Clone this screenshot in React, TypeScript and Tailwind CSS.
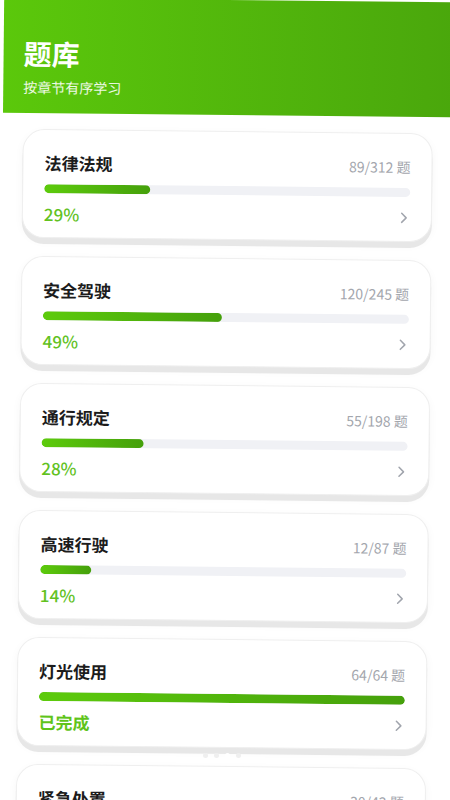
import React from "react";

type Item = { t: string; done: number; total: number };

const items: Item[] = [
  { t: "法律法规", done: 89, total: 312 },
  { t: "安全驾驶", done: 120, total: 245 },
  { t: "通行规定", done: 55, total: 198 },
  { t: "高速行驶", done: 12, total: 87 },
  { t: "灯光使用", done: 64, total: 64 },
  { t: "紧急处置", done: 30, total: 42 },
];

function Chevron() {
  return (
    <svg
      width="18"
      height="18"
      viewBox="0 0 24 24"
      fill="none"
      stroke="#a1a5ad"
      strokeWidth="2"
      strokeLinecap="round"
      strokeLinejoin="round"
      className="-mr-[3px]"
    >
      <path d="m9 18 6-6-6-6" />
    </svg>
  );
}

function Card({ item }: { item: Item }) {
  const pct = Math.round((item.done / item.total) * 100);
  const complete = item.done >= item.total;
  return (
    <div className="h-[109px] shrink-0 rounded-[22px] border border-[#efefef] bg-white px-[21px] pt-[21px] shadow-[0_6px_0_#e7e7e7,0_3px_10px_rgba(0,0,0,0.04)]">
      <div className="flex h-6 items-center justify-between">
        <span className="text-[17px] font-semibold leading-6 text-[#1c1c1c]">{item.t}</span>
        <span className="text-[14px] leading-6 text-[#a3a6ad]">
          {item.done}/{item.total} 题
        </span>
      </div>
      <div className="mt-[9px] h-[9px] overflow-hidden rounded-full bg-[#f0f1f5]">
        <div
          className="h-full rounded-full bg-gradient-to-r from-[#5dcb0c] to-[#45a00b]"
          style={{ width: `${pct}%` }}
        />
      </div>
      <div className="mt-[9px] flex h-6 items-center justify-between">
        <span
          className={
            complete
              ? "text-[17px] font-bold leading-6 text-[#5fc41a]"
              : "text-[17px] font-medium leading-6 text-[#62c21f]"
          }
        >
          {complete ? "已完成" : `${pct}%`}
        </span>
        <Chevron />
      </div>
    </div>
  );
}

export default function App() {
  return (
    <div className="relative h-[800px] w-[450px] overflow-hidden bg-white font-['Noto_Sans_CJK_SC',sans-serif]">
      <div className="h-[800px] w-[450px] origin-center rotate-[0.6deg]">
        <div className="h-[115px] bg-gradient-to-r from-[#5bc80b] to-[#4aa70c] px-5 pt-[37px]">
          <h1 className="text-[28px] font-bold leading-9 text-white">题库</h1>
          <p className="mt-[6px] text-[14px] leading-5 text-white/90">按章节有序学习</p>
        </div>
        <div className="mx-5 mt-4 flex flex-col gap-[18px]">
          {items.map((it) => (
            <Card key={it.t} item={it} />
          ))}
        </div>
      </div>
      <div className="absolute left-[203px] top-[753px] flex gap-[6px]">
        <span className="h-[5px] w-[5px] rounded-full bg-[#efefef]" />
        <span className="h-[5px] w-[5px] rounded-full bg-[#efefef]" />
        <span className="h-[5px] w-[5px] rounded-full bg-white" />
        <span className="h-[5px] w-[5px] rounded-full bg-[#efefef]" />
      </div>
    </div>
  );
}
